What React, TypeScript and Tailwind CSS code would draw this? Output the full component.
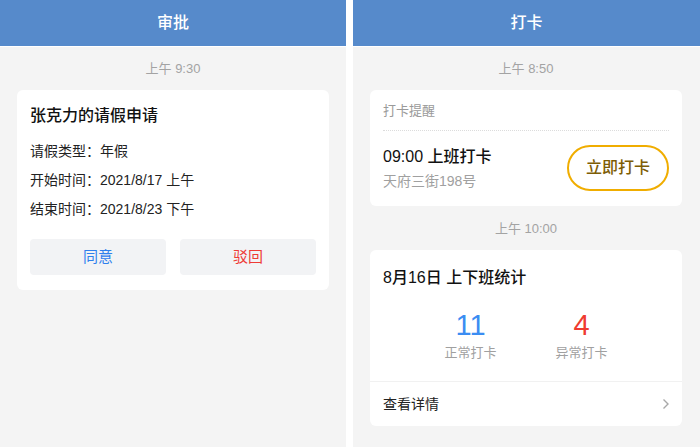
import React from "react";

const font = { fontFamily: '"Liberation Sans","Noto Sans CJK SC",sans-serif' };

function Header({ title }: { title: string }) {
  return (
    <div className="h-[47px] bg-[#568acb] border-b border-white flex items-center justify-center text-white text-[16px] font-medium">
      {title}
    </div>
  );
}

function Stamp({ t }: { t: string }) {
  return <div className="text-center text-[13px] leading-[16px] text-[#a3a3a3]">{t}</div>;
}

export default function App() {
  return (
    <div className="w-[700px] h-[447px] bg-white flex gap-[7px] overflow-hidden" style={font}>
      <div className="w-[346px] h-full bg-[#f4f4f4] flex flex-col">
        <Header title="审批" />
        <div className="pt-[14px] px-[17px]">
          <Stamp t="上午 9:30" />
          <div className="mt-[13px] bg-white rounded-[6px] px-[13px] pt-[15px] pb-[15px]">
            <div className="text-[16px] leading-[22px] text-[#111] font-medium">张克力的请假申请</div>
            <div className="mt-[14px] flex flex-col gap-[9px] text-[14px] leading-[20px] text-[#222]">
              <div>请假类型：年假</div>
              <div>开始时间：2021/8/17 上午</div>
              <div>结束时间：2021/8/23 下午</div>
            </div>
            <div className="mt-[20px] flex gap-[14px]">
              <div className="flex-1 h-[36px] rounded-[4px] bg-[#f2f3f5] flex items-center justify-center text-[15px] text-[#2f80ed]">同意</div>
              <div className="flex-1 h-[36px] rounded-[4px] bg-[#f2f3f5] flex items-center justify-center text-[15px] text-[#ee3b36]">驳回</div>
            </div>
          </div>
        </div>
      </div>
      <div className="flex-1 h-full bg-[#f4f4f4] flex flex-col">
        <Header title="打卡" />
        <div className="pt-[14px] pl-[17px] pr-[18px]">
          <Stamp t="上午 8:50" />
          <div className="mt-[13px] bg-white rounded-[6px] px-[13px]">
            <div className="pt-[11px] pb-[10px] text-[13px] leading-[19px] text-[#9a9a9a] border-b border-dotted border-[#dcdcdc]">打卡提醒</div>
            <div className="flex items-center justify-between pt-[14px] pb-[15px]">
              <div className="flex flex-col">
                <div className="text-[16px] leading-[22px] text-[#111] font-medium">09:00 上班打卡</div>
                <div className="mt-[3px] text-[14px] leading-[20px] text-[#a0a0a0]">天府三街198号</div>
              </div>
              <div className="w-[102px] h-[46px] rounded-full border-[2.5px] border-[#f0ad00] flex items-center justify-center text-[16px] text-[#7d5d05] font-medium">立即打卡</div>
            </div>
          </div>
          <div className="mt-[15px]">
            <Stamp t="上午 10:00" />
          </div>
          <div className="mt-[13px] bg-white rounded-[6px]">
            <div className="px-[13px] pt-[17px] text-[16px] leading-[22px] text-[#111] font-medium">8月16日 上下班统计</div>
            <div className="flex justify-center pt-[19px] pb-[19px]">
              <div className="w-[111px] flex flex-col items-center">
                <div className="text-[29px] leading-[34px] text-[#3b8df2]">11</div>
                <div className="mt-[2px] text-[13px] leading-[18px] text-[#a0a0a0]">正常打卡</div>
              </div>
              <div className="w-[111px] flex flex-col items-center">
                <div className="text-[29px] leading-[34px] text-[#ef3b30]">4</div>
                <div className="mt-[2px] text-[13px] leading-[18px] text-[#a0a0a0]">异常打卡</div>
              </div>
            </div>
            <div className="border-t border-[#f1f1f1] px-[13px] h-[45px] flex items-center justify-between">
              <span className="text-[14px] text-[#222]">查看详情</span>
              <svg width="8" height="12" viewBox="0 0 8 12" className="mr-[-1px]">
                <path d="M1.5 1.5 L6 6 L1.5 10.5" fill="none" stroke="#a8a8a8" strokeWidth="1.4" />
              </svg>
            </div>
          </div>
        </div>
      </div>
    </div>
  );
}
